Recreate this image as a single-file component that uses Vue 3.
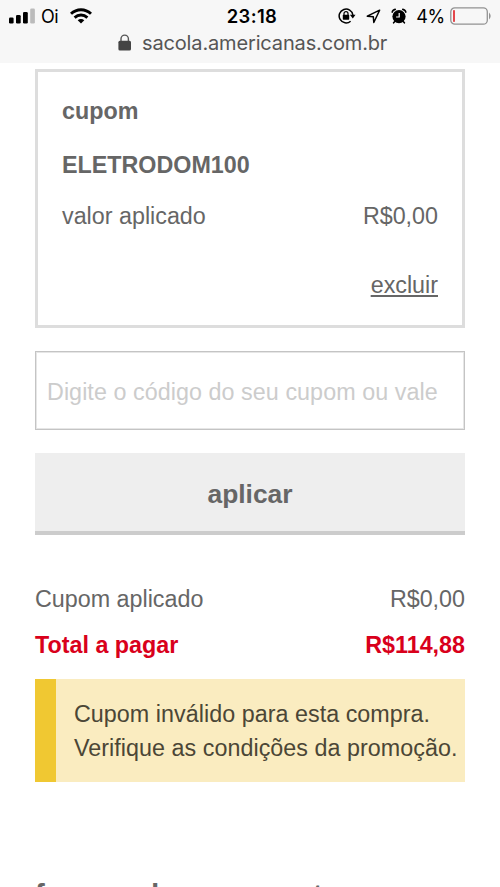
<script setup>
const coupon = { code: 'ELETRODOM100', value: 'R$0,00' }
const total = 'R$114,88'
</script>

<template>
  <div class="screen">
    <header class="browser">
      <div class="status">
        <div class="side">
          <svg class="signal" width="26" height="16" viewBox="0 0 26 16">
            <rect x="0" y="9.5" width="4.6" height="6" rx="1.3" />
            <rect x="7" y="7" width="4.7" height="8.5" rx="1.3" />
            <rect x="14" y="4" width="4.8" height="11.5" rx="1.3" />
            <rect x="21.2" y="0.5" width="4.7" height="15" rx="1.3" fill="#bbb" />
          </svg>
          <span class="carrier">Oi</span>
          <svg class="wifi" width="22" height="16" viewBox="0 0 22 16">
            <g fill="none" stroke="#000" stroke-width="2.9">
              <path d="M1 5.8C6.7.3 15.3.3 21 5.8" />
              <path d="M4.6 9.6c3.8-3.5 9-3.5 12.8 0" />
            </g>
            <path d="M11 15.6l-3.3-3.4c1.9-1.6 4.7-1.6 6.6 0z" />
          </svg>
        </div>
        <span class="clock">23:18</span>
        <div class="side right">
          <svg class="rotation" width="18" height="16" viewBox="0 0 18 16">
            <path d="M14.9 7A6.9 6.9 0 1 0 12.6 13.2" fill="none" stroke="#000" stroke-width="1.5" />
            <path d="M11.9 6.8h5.6L14.8 10.6z" />
            <rect x="4.8" y="6.8" width="6.4" height="4.9" rx=".6" />
            <path d="M6 7V5.6a2 2 0 0 1 4 0V7" fill="none" stroke="#000" stroke-width="1.2" />
          </svg>
          <svg class="location" width="15" height="15" viewBox="0 0 15 15">
            <path d="M1.3 7.2L13.6 1.2 7.8 13.5 7.3 7.7z" fill="none" stroke="#000" stroke-width="1.5" stroke-linejoin="round" />
          </svg>
          <svg class="alarm" width="16" height="16" viewBox="0 0 16 16">
            <circle cx="8" cy="8.6" r="6.6" />
            <path d="M1.2 4.2Q1.6 1.9 4.2 1.4M11.8 1.4Q14.4 1.9 14.8 4.2M3.8 13.4l-1.2 1.4M12.2 13.4l1.2 1.4" fill="none" stroke="#000" stroke-width="1.6" stroke-linecap="round" />
            <path d="M8.2 5v4H5.1" fill="none" stroke="#fff" stroke-width="1.2" />
          </svg>
          <span class="percent">4%</span>
          <svg class="battery" width="42" height="18" viewBox="0 0 42 18">
            <rect x=".8" y=".8" width="36.5" height="16.4" rx="4" fill="none" stroke="#929292" stroke-width="1.3" />
            <rect x="3" y="3" width="2" height="12" rx=".8" fill="#e4474c" />
            <path d="M39 5.5q3.4 3.5 0 7z" fill="#929292" />
          </svg>
        </div>
      </div>
      <div class="address">
        <svg width="14" height="17" viewBox="0 0 14 17">
          <rect x=".4" y="6.7" width="12.6" height="9.8" rx="1.5" fill="#444" />
          <path d="M3 7V4.8a3.7 3.7 0 0 1 7.4 0V7" fill="none" stroke="#555" stroke-width="1.4" />
        </svg>
        <span>sacola.americanas.com.br</span>
      </div>
    </header>

    <main>
      <section class="card">
        <h2>cupom</h2>
        <strong class="code">{{ coupon.code }}</strong>
        <div class="row applied">
          <span>valor aplicado</span>
          <span>{{ coupon.value }}</span>
        </div>
        <a class="remove">excluir</a>
      </section>

      <input class="field" type="text" placeholder="Digite o código do seu cupom ou vale" />
      <button class="apply" type="button">aplicar</button>

      <div class="row summary">
        <span>Cupom aplicado</span>
        <span>{{ coupon.value }}</span>
      </div>
      <div class="row total">
        <span>Total a pagar</span>
        <span>{{ total }}</span>
      </div>

      <div class="alert">
        <div>Cupom inválido para esta compra.</div>
        <div>Verifique as condições da promoção.</div>
      </div>

      <h1>formas de pagamento</h1>
    </main>
  </div>
</template>

<style>
body {
  margin: 0;
  overflow: hidden;
}
</style>

<style scoped>
.screen {
  width: 500px;
  height: 887px;
  overflow: hidden;
  background: #fff;
  color: #666;
  font-family: "Liberation Sans", Arial, sans-serif;
  font-size: 23.3px;
}
svg {
  display: block;
  flex: none;
}
.browser {
  box-sizing: border-box;
  height: 63px;
  background: #f7f7f7;
  font-family: Inter, sans-serif;
}
.status {
  display: grid;
  grid-template-columns: 1fr auto 1fr;
  align-items: center;
  height: 32px;
  padding: 0 8px 0 9px;
  color: #000;
}
.side {
  display: flex;
  align-items: center;
}
.right {
  justify-content: flex-end;
}
.carrier {
  width: 18px;
  margin: 0 11px 0 6px;
  font-size: 18px;
  letter-spacing: -0.4px;
}
.clock {
  padding-left: 3px;
  font-size: 18.4px;
  font-weight: 600;
  letter-spacing: 0.4px;
}
.location {
  margin-left: 10px;
}
.alarm {
  margin-left: 10px;
}
.percent {
  margin: 0 5px 0 9px;
  font-size: 18px;
  letter-spacing: -0.3px;
}
.address {
  display: flex;
  align-items: center;
  height: 21px;
  padding-left: 118px;
  gap: 10px;
  color: #555;
  font-size: 20px;
  letter-spacing: -0.15px;
}
main {
  padding: 6px 35px 0;
}
.card {
  display: flex;
  flex-direction: column;
  box-sizing: border-box;
  height: 259px;
  padding: 24px 24px 0;
  border: 3px solid #ddd;
}
h2,
.code {
  margin: 0;
  font-size: 23.3px;
  font-weight: 700;
  line-height: 30px;
}
.code {
  margin-top: 24px;
}
.row {
  display: flex;
  justify-content: space-between;
  line-height: 30px;
}
.applied {
  margin-top: 21px;
}
.remove {
  align-self: flex-end;
  margin-top: 39px;
  line-height: 30px;
  text-decoration: underline;
  text-decoration-thickness: 1.5px;
  text-underline-offset: 2px;
}
.field {
  display: block;
  box-sizing: border-box;
  width: 100%;
  height: 79px;
  margin-top: 23px;
  padding: 4px 0 0 11px;
  border: 1px solid #c4c4c4;
  border-radius: 0;
  outline: 1px solid #e6e6e6;
  outline-offset: -2px;
  background: #fff;
  font: inherit;
  letter-spacing: 0.06px;
}
.field::placeholder {
  color: #ccc;
  opacity: 1;
}
.apply {
  display: block;
  width: 100%;
  height: 82px;
  margin-top: 23px;
  padding: 4px 0 0;
  border: 0;
  border-bottom: 4px solid #ccc;
  background: #eee;
  color: #666;
  font: 700 26.4px "Liberation Sans", Arial, sans-serif;
}
.summary {
  margin-top: 49px;
}
.total {
  margin-top: 16px;
  color: #d9001b;
  font-weight: 700;
}
.alert {
  box-sizing: border-box;
  height: 103px;
  margin-top: 19px;
  padding: 18px 0 0 18px;
  border-left: 21px solid #f0c832;
  background: #faecc0;
  color: #4b4636;
  line-height: 34px;
  letter-spacing: 0.04px;
  white-space: nowrap;
}
h1 {
  margin: 96px 0 0;
  font-size: 29.4px;
  line-height: 34px;
  white-space: nowrap;
}
</style>
